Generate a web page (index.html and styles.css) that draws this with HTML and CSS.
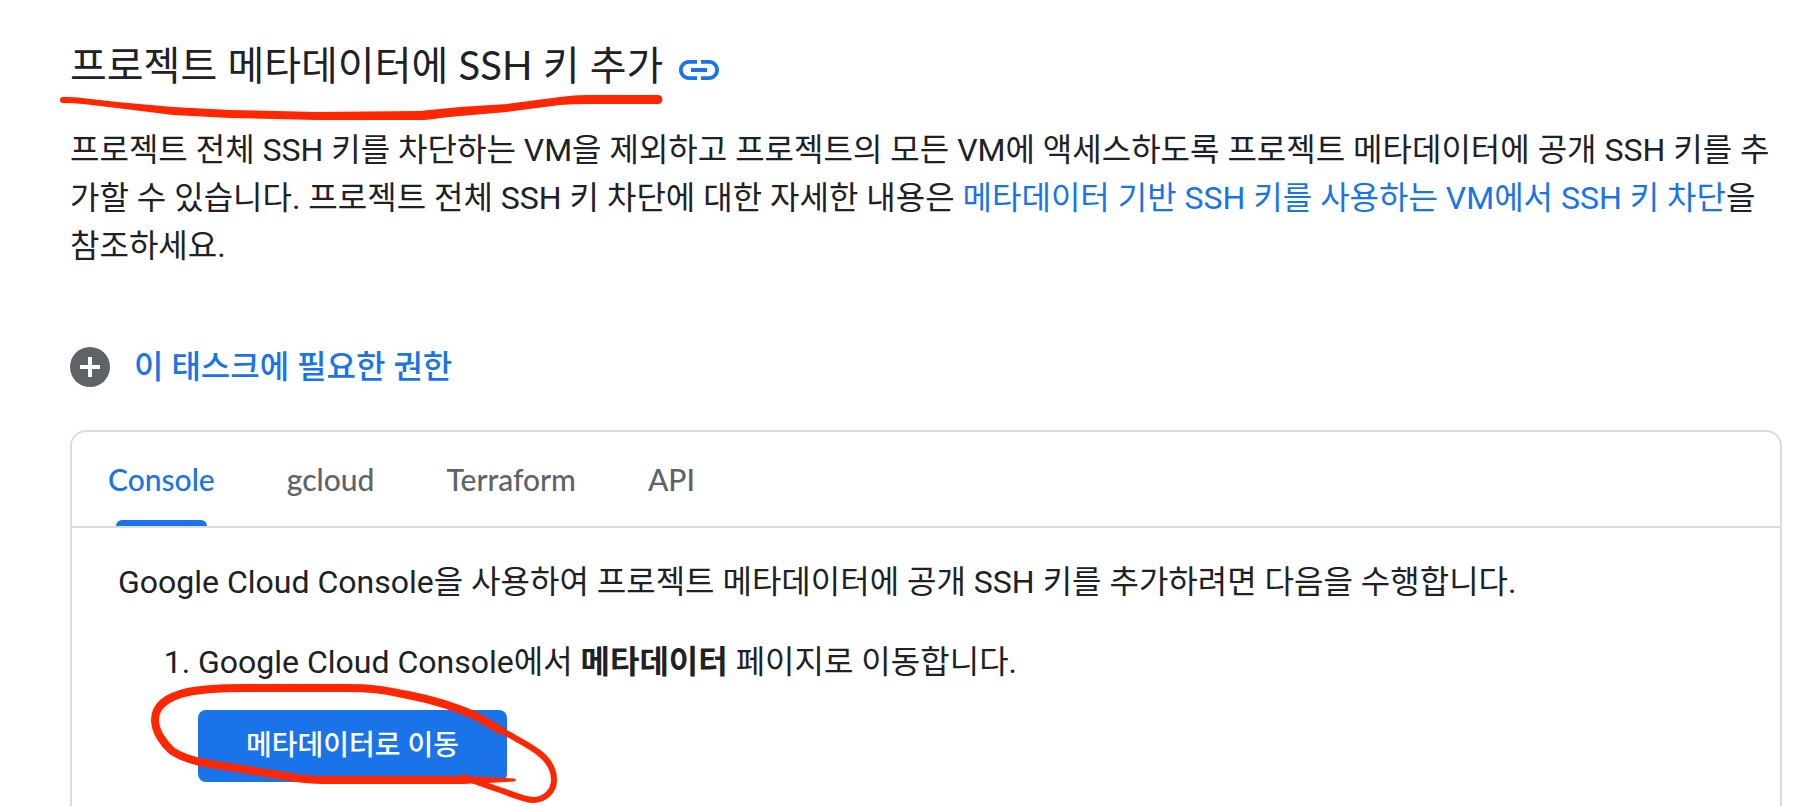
FILE: index.html
```html
<!DOCTYPE html>
<html lang="ko">
<head>
<meta charset="utf-8">
<title>프로젝트 메타데이터에 SSH 키 추가</title>
<link rel="stylesheet" href="styles.css">
</head>
<body>
<main class="article">
  <h2 class="heading">
    <span class="heading-text">프로젝트 메타데이터에 SSH 키 추가</span>
    <a class="anchor" href="#ssh" aria-label="이 섹션 링크">
      <svg class="icon" viewBox="0 0 24 24" aria-hidden="true"><path d="M3.9 12c0-1.71 1.39-3.1 3.1-3.1h4V7H7c-2.76 0-5 2.24-5 5s2.24 5 5 5h4v-1.9H7c-1.71 0-3.1-1.39-3.1-3.1zM8 13h8v-2H8v2zm9-6h-4v1.9h4c1.71 0 3.1 1.39 3.1 3.1s-1.39 3.1-3.1 3.1h-4V17h4c2.76 0 5-2.24 5-5s-2.24-5-5-5z"/></svg>
    </a>
    <svg class="mark mark-underline" viewBox="0 0 604 28" aria-hidden="true"><path d="M3 3C10 3 16 3 22 4L57 8L113 13L170 16L257 18L360 17Q368 16 380 15L400 13L447 10L500 3Q514 1 527 1H598A4.400 4.400 0 0 1 598 10H527Q514 10 500 11L447 18L400 22L380 24Q368 26 360 26H257L170 24L113 21L57 14L23 10Q14 9 3 9A3 3 0 0 1 3 3Z"/></svg>
  </h2>
  <p class="text">프로젝트 전체 SSH 키를 차단하는 VM을 제외하고 프로젝트의 모든 VM에 액세스하도록 프로젝트 메타데이터에 공개 SSH 키를 추가할 수 있습니다. 프로젝트 전체 SSH 키 차단에 대한 자세한 내용은 <a class="link" href="#block">메타데이터 기반 SSH 키를 사용하는 VM에서 SSH 키 차단</a>을 참조하세요.</p>
  <button class="expander" type="button" aria-expanded="false">
    <svg class="icon icon-plus" viewBox="0 0 40 40" aria-hidden="true"><circle cx="20" cy="20" r="20"/><path d="M18 10h4v8h8v4h-8v8h-4v-8h-8v-4h8z"/></svg>
    <span>이 태스크에 필요한 권한</span>
  </button>
  <section class="card">
    <div class="tabs" role="tablist">
      <button class="tab tab-active" type="button" role="tab" aria-selected="true">Console</button>
      <button class="tab" type="button" role="tab" aria-selected="false">gcloud</button>
      <button class="tab" type="button" role="tab" aria-selected="false">Terraform</button>
      <button class="tab" type="button" role="tab" aria-selected="false">API</button>
    </div>
    <div class="panel">
      <p class="text">Google Cloud Console을 사용하여 프로젝트 메타데이터에 공개 SSH 키를 추가하려면 다음을 수행합니다.</p>
      <ol class="steps">
        <li>
          <p class="text">Google Cloud Console에서 <b>메타데이터</b> 페이지로 이동합니다.</p>
          <div class="action">
            <a class="button" href="#metadata">메타데이터로 이동</a>
            <svg class="mark mark-circle" viewBox="148 680 412 126" aria-hidden="true">
              <path class="stroke" d="M463 780H325C308 780 300 779 285 776L205 763C190 760 178 755 172 751C163 743 155 731 155 720C155 704 170 696 188 692C204 689 220 688 245 688H345C378 688 386 691 408 695C434 700 458 708 476 716L500 730"/>
              <path class="stroke stroke-thin" d="M496 727C512 737 524 742 538 752C550 761 554 770 554 780C554 791 545 800 533 800C524 800 510 793 494 788L463 777"/>
              <path d="M460 776L488 777L514 778.500Q518 780 514 781.500L488 783L460 784Z"/>
            </svg>
          </div>
        </li>
      </ol>
    </div>
  </section>
</main>
</body>
</html>
```
FILE: styles.css
```css
* { box-sizing: border-box; }

body {
  margin: 0;
  height: 100vh;
  overflow: hidden;
  background: #fff;
  color: #202124;
  font: 400 32px/48px Roboto, "Noto Sans CJK KR", sans-serif;
}

.article { padding: 33px 18px 0 70px; }

.heading {
  position: relative;
  display: flex;
  align-items: center;
  gap: 12px;
  margin: 0 0 29px;
  font: 400 40px/64px Lato, "Noto Sans CJK KR", sans-serif;
}

.icon { display: block; width: 48px; height: 48px; fill: #1a73e8; }
.anchor { padding-top: 10px; }

.mark { position: absolute; pointer-events: none; fill: #ff2600; overflow: visible; }
.mark-underline { left: -10px; top: 61px; width: 604px; height: 28px; }
.mark-circle { left: -50px; top: -30px; width: 412px; height: 126px; }
.stroke { fill: none; stroke: #ff2600; stroke-width: 8; stroke-linecap: round; stroke-linejoin: round; }
.stroke-thin { stroke-width: 6; }

.text { margin: 0; }
.link { color: #1a73e8; text-decoration: none; }

button { border: 0; background: none; padding: 0; cursor: pointer; }

.expander {
  display: flex;
  align-items: center;
  gap: 24px;
  margin: 73px 0 39px;
  color: #1a73e8;
  font: 500 32px/48px Roboto, "Noto Sans CJK KR", sans-serif;
}
.icon-plus { width: 40px; height: 40px; fill: #5f6368; }
.icon-plus path { fill: #fff; }

.card {
  border: 2px solid #dadce0;
  border-radius: 16px;
  min-height: 480px;
}

.tabs { display: flex; border-bottom: 2px solid #dadce0; }
.tab {
  position: relative;
  height: 94px;
  padding: 0 36px;
  color: #5f6368;
  font: 500 30px/48px Lato, "Open Sans", sans-serif;
}
.tab-active { color: #1a73e8; }
.tab-active::after {
  content: "";
  position: absolute;
  left: 44px;
  right: 44px;
  bottom: 0;
  height: 6px;
  border-radius: 6px 6px 0 0;
  background: #1a73e8;
}

.panel { padding: 30px 46px; }
.steps { margin: 32px 0 0; padding-left: 80px; }

.action { position: relative; display: flex; margin-top: 24px; }
.button {
  padding: 12px 48px;
  border-radius: 8px;
  background: #1a73e8;
  color: #fff;
  font: 500 28px/48px Roboto, "Noto Sans CJK KR", sans-serif;
  text-decoration: none;
}
```
